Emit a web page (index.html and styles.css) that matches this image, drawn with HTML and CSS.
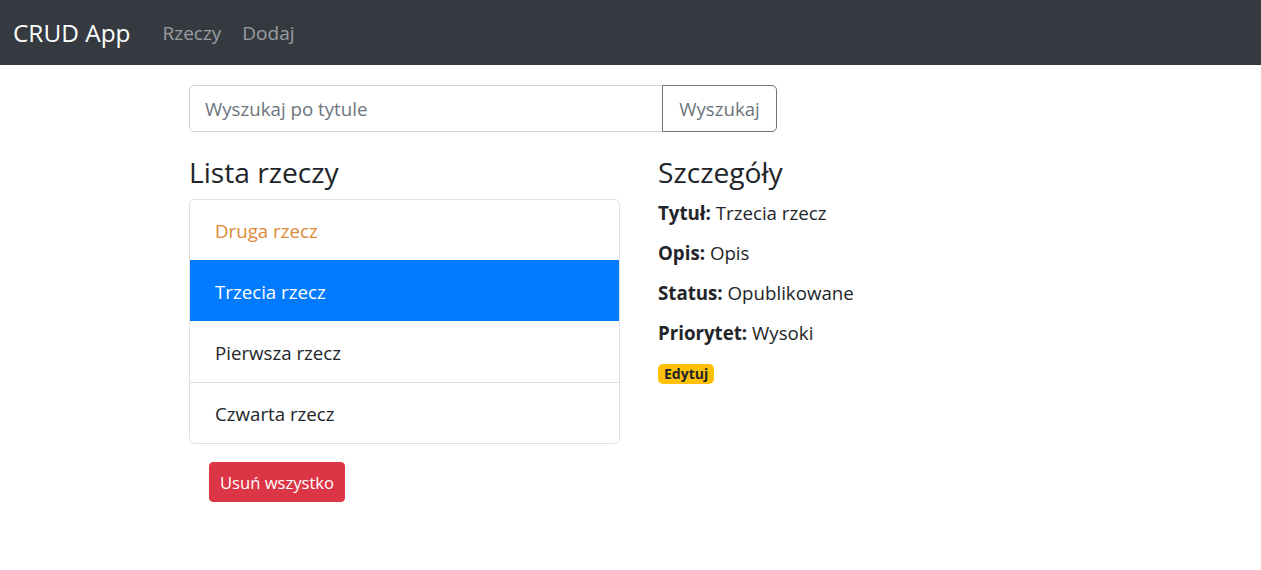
FILE: index.html
```html
<!DOCTYPE html>
<html lang="pl">
<head>
<meta charset="utf-8">
<title>CRUD App</title>
<link rel="stylesheet" href="styles.css">
</head>
<body>
<nav class="navbar">
  <a class="brand" href="#">CRUD App</a>
  <a class="nav-link" href="#">Rzeczy</a>
  <a class="nav-link" href="#">Dodaj</a>
</nav>
<main class="content">
  <div class="search">
    <input class="search-input" type="text" placeholder="Wyszukaj po tytule">
    <button class="search-btn" type="button">Wyszukaj</button>
  </div>
  <div class="columns">
    <section class="list-col">
      <h4 class="heading">Lista rzeczy</h4>
      <ul class="list-group">
        <li class="item item-hover">Druga rzecz</li>
        <li class="item item-active">Trzecia rzecz</li>
        <li class="item">Pierwsza rzecz</li>
        <li class="item">Czwarta rzecz</li>
      </ul>
      <button class="btn-danger" type="button">Usuń wszystko</button>
    </section>
    <section class="details-col">
      <h4 class="heading">Szczegóły</h4>
      <div class="field"><strong>Tytuł:</strong> Trzecia rzecz</div>
      <div class="field"><strong>Opis:</strong> Opis</div>
      <div class="field"><strong>Status:</strong> Opublikowane</div>
      <div class="field"><strong>Priorytet:</strong> Wysoki</div>
      <a class="badge" href="#">Edytuj</a>
    </section>
  </div>
</main>
</body>
</html>
```
FILE: styles.css
```css
* { box-sizing: border-box; }
html, body { margin: 0; padding: 0; }
body {
  font-family: "Open Sans", "Noto Sans", sans-serif;
  font-size: 18.7px;
  color: #212529;
  background: #fff;
}
a { text-decoration: none; }

.navbar {
  height: 65px;
  background: #343a40;
  display: flex;
  align-items: center;
  padding: 0 0 0 13px;
}
.brand {
  color: #fff;
  font-size: 24.4px;
  margin-right: 32px;
}
.nav-link {
  color: rgba(255,255,255,0.5);
  font-size: 19px;
  margin-right: 21px;
}

.content {
  padding: 20px 0 0 189px;
}
.search {
  display: flex;
  width: 588px;
  height: 47px;
}
.search-input {
  flex: 1;
  min-width: 0;
  height: 100%;
  border: 1px solid #ced4da;
  border-radius: 5px 0 0 5px;
  padding: 0 15px;
  font: inherit;
  font-size: 18.7px;
  color: #495057;
  outline: none;
}
.search-input::placeholder { color: #6c757d; }
.search-btn {
  height: 100%;
  width: 115px;
  border: 1px solid #6c757d;
  border-radius: 0 5px 5px 0;
  background: #fff;
  color: #6c757d;
  font: inherit;
  font-size: 18.7px;
  padding: 0;
  margin-left: -1px;
}

.columns {
  display: flex;
  margin-top: 23px;
}
.list-col { width: 431px; margin-right: 38px; }
.details-col { flex: 1; }

.heading {
  font-size: 28.2px;
  font-weight: 400;
  line-height: 34px;
  margin: 0 0 10px;
  height: 34px;
}

.list-group {
  list-style: none;
  margin: 0;
  padding: 0;
  border: 1px solid rgba(0,0,0,0.125);
  border-radius: 5px;
  overflow: hidden;
}
.item {
  height: 61px;
  display: flex;
  align-items: center;
  padding: 1px 24px 0 25px;
  border-top: 1px solid rgba(0,0,0,0.125);
}
.item:first-child { border-top: none; height: 60px; }
.item-hover { color: #dd8a36; }
.item-active {
  background: #007bff;
  color: #fff;
  border-top-color: #007bff;
  margin: 0 -1px;
  padding-left: 26px;
}
.item-active + .item { border-top-color: transparent; }

.btn-danger {
  margin: 18px 0 0 20px;
  height: 40px;
  padding: 0 10px;
  background: #dc3545;
  border: 1px solid #dc3545;
  border-radius: 4px;
  color: #fff;
  font: inherit;
  font-size: 16.6px;
}

.field {
  line-height: 28px;
  margin-bottom: 12px;
}
.field:first-of-type { margin-top: 4px; }
.field strong { font-weight: 700; }

.badge {
  display: inline-block;
  margin-top: 3px;
  background: #ffc107;
  color: #212529;
  font-size: 14px;
  font-weight: 700;
  line-height: 20px;
  padding: 0 6px;
  border-radius: 5px;
}
```
